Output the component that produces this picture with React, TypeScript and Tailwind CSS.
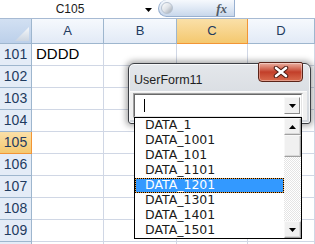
import React from 'react';

const cols = [
  { name: 'A', w: 72 },
  { name: 'B', w: 73 },
  { name: 'C', w: 71 },
  { name: 'D', w: 67 },
];

const rows = [101, 102, 103, 104, 105, 106, 107, 108, 109, 0];

const items = ['DATA_1', 'DATA_1001', 'DATA_101', 'DATA_1101', 'DATA_1201', 'DATA_1301', 'DATA_1401', 'DATA_1501'];

const Arrow: React.FC<{ up?: boolean }> = ({ up }) => (
  <svg width="7" height="4" viewBox="0 0 7 4">
    <polygon points={up ? '3.5,0 7,4 0,4' : '0,0 7,0 3.5,4'} fill="#000" />
  </svg>
);

const ScrollBtn: React.FC<{ up?: boolean }> = ({ up }) => (
  <div className="h-[17px] w-[17px] flex items-center justify-center bg-[#f0f0f0] border-t border-l border-t-[#f8f8f8] border-l-[#f8f8f8] border-b border-r border-b-[#a0a0a0] border-r-[#a0a0a0] shadow-[inset_-1px_-1px_0_#d8d8d8]">
    <Arrow up={up} />
  </div>
);

const App: React.FC = () => {
  return (
    <div
      className="relative w-[315px] h-[244px] overflow-hidden bg-white"
      style={{ fontFamily: '"Liberation Sans", Arial, sans-serif' }}
    >
      {/* formula bar */}
      <div className="flex h-[19px] border-b border-[#a7bad3] bg-white">
        <div className="relative w-[158px] flex items-center">
          <span className="w-[140px] text-center text-[12px] text-[#1a1a1a]">C105</span>
          <div className="absolute left-[145px] top-[8px]">
            <svg width="7" height="4" viewBox="0 0 7 4">
              <polygon points="0,0 7,0 3.5,4" fill="#000" />
            </svg>
          </div>
        </div>
        <div className="relative w-[77px] h-[17px] rounded-l-[9px] bg-gradient-to-b from-[#f6f9fd] via-[#e0e9f5] to-[#c8d7eb] border-b border-l border-r border-[#98b0d0] flex items-center justify-end pr-[7px]">
          <div className="absolute left-[2px] top-[2px] w-[12px] h-[12px] rounded-full bg-gradient-to-br from-[#ffffff] via-[#dfe3e8] to-[#9ea6b1] border border-[#b7c2d0]" />
          <span
            className="text-[13px] italic font-bold text-[#505a66] leading-none"
            style={{ fontFamily: '"Liberation Serif", serif' }}
          >
            fx
          </span>
        </div>
        <div className="flex-1" />
      </div>

      {/* column headers */}
      <div className="flex h-[25px]">
        <div className="w-[32px] shrink-0 relative bg-gradient-to-b from-[#d2e0f2] to-[#bcd0ea] border-r border-b border-[#9eb6ce]">
          <svg className="absolute left-0 top-0" width="31" height="24" viewBox="0 0 31 24">
            <defs>
              <linearGradient id="tri" x1="0" y1="0" x2="0" y2="1">
                <stop offset="0" stopColor="#f6f8fb" />
                <stop offset="1" stopColor="#ccd5e1" />
              </linearGradient>
            </defs>
            <polygon points="29,8 29,22 15,22" fill="url(#tri)" />
          </svg>
        </div>
        {cols.map((c) => (
          <div
            key={c.name}
            style={{ width: c.w }}
            className={
              c.name === 'C'
                ? 'shrink-0 flex items-center justify-center text-[13px] text-[#1f3b5f] bg-gradient-to-b from-[#fae0a8] to-[#f4c86e] border-r border-b border-[#f29536]'
                : 'shrink-0 flex items-center justify-center text-[13px] text-[#1f3b5f] bg-gradient-to-b from-[#f6f9fd] to-[#e2eaf6] border-r border-b border-[#9eb6ce]'
            }
          >
            {c.name}
          </div>
        ))}
      </div>

      {/* rows */}
      {rows.map((r, i) => (
        <div key={i} className="flex h-[22px]">
          <div
            className={
              r === 105
                ? 'w-[32px] shrink-0 flex items-center justify-center text-[14px] text-[#1f3b5f] bg-gradient-to-b from-[#fae0a8] to-[#f4c86e] border-r border-b border-[#f29536]'
                : 'w-[32px] shrink-0 flex items-center justify-center text-[14px] text-[#1f3b5f] bg-[#e4ecf7] border-r border-b border-[#9eb6ce]'
            }
          >
            {r ? r : ''}
          </div>
          {cols.map((c) => (
            <div
              key={c.name}
              style={{ width: c.w }}
              className="shrink-0 flex items-center pl-[4px] text-[15px] text-black border-r border-b border-[#d0d7e5]"
            >
              {r === 101 && c.name === 'A' ? 'DDDD' : ''}
            </div>
          ))}
        </div>
      ))}

      {/* UserForm window */}
      <div
        className="absolute left-[128px] top-[63px] w-[183px] h-[61px] rounded-t-[6px] rounded-b-[3px] border border-[#3c3f44] bg-gradient-to-b from-[#e4e7eb] to-[#d0d5db] shadow-[0_0_6px_2px_rgba(0,0,0,0.35),inset_0_0_0_1px_rgba(255,255,255,0.75)] flex flex-col"
      >
        <div className="h-[27px] flex items-start justify-between">
          <span className="pl-[5px] pt-[7px] text-[12.5px] text-[#1e1e1e]">UserForm11</span>
          <div className="mt-[-2px] mr-[7px] w-[45px] h-[20px] rounded-b-[4px] rounded-t-[2px] border border-[#5b2419] bg-gradient-to-b from-[#eab0a2] via-[#c23e29] to-[#d96a4d] shadow-[inset_0_0_0_1px_rgba(255,255,255,0.35)] flex items-center justify-center">
            <svg width="16" height="12" viewBox="0 0 16 12">
              <path d="M3 2 L13 10 M13 2 L3 10" stroke="#4a1a12" strokeWidth="4.5" strokeLinecap="round" />
              <path d="M3 2 L13 10 M13 2 L3 10" stroke="#ffffff" strokeWidth="2.6" strokeLinecap="round" />
            </svg>
          </div>
        </div>
        <div className="flex-1 ml-[1px] mr-[3px] mb-[3px] bg-[#f0f0f0] border-t border-[#fafafa] pt-[1px] pl-[3px] pr-[3px]">
          <div className="w-[170px] h-[25px] border-t border-l border-[#a0a0a0] border-b border-r border-b-white border-r-white">
            <div className="h-full bg-white border-t border-l border-[#696969] border-b border-r border-b-[#e3e3e3] border-r-[#e3e3e3] flex items-center justify-between">
              <div className="ml-[9px] w-[1px] h-[13px] bg-black" />
              <div className="mr-[1px] h-[17px] w-[16px] flex items-center justify-center bg-[#f0f0f0] border-t border-l border-[#f8f8f8] border-b border-r border-b-[#8a8a8a] border-r-[#8a8a8a]">
                <Arrow />
              </div>
            </div>
          </div>
        </div>
      </div>

      {/* dropdown list */}
      <div
        className="absolute left-[134px] top-[117px] w-[168px] h-[122px] border border-black bg-white flex"
        style={{ fontFamily: '"DejaVu Sans", Tahoma, sans-serif' }}
      >
        <div className="flex-1 flex flex-col">
          {items.map((it, i) =>
            i === 4 ? (
              <div key={it} className="h-[15px] border border-dotted border-black bg-[#e89a3a]">
                <div className="h-full bg-[#3399ff] flex items-center pl-[9px] text-[12.5px] text-white">{it}</div>
              </div>
            ) : (
              <div key={it} className="h-[15px] flex items-center pl-[10px] text-[12.5px] text-[#1a1a1a]">
                {it}
              </div>
            )
          )}
        </div>
        <div className="w-[17px] flex flex-col">
          <ScrollBtn up />
          <div className="flex-1 flex flex-col bg-[repeating-conic-gradient(#e4e4e4_0%_25%,#ffffff_0%_50%)] bg-[length:2px_2px]">
            <div className="h-[22px] bg-[#f0f0f0] border-t border-l border-[#f8f8f8] border-b border-r border-b-[#a0a0a0] border-r-[#a0a0a0] shadow-[inset_-1px_-1px_0_#d8d8d8]" />
          </div>
          <ScrollBtn />
        </div>
      </div>
    </div>
  );
};

export default App;
